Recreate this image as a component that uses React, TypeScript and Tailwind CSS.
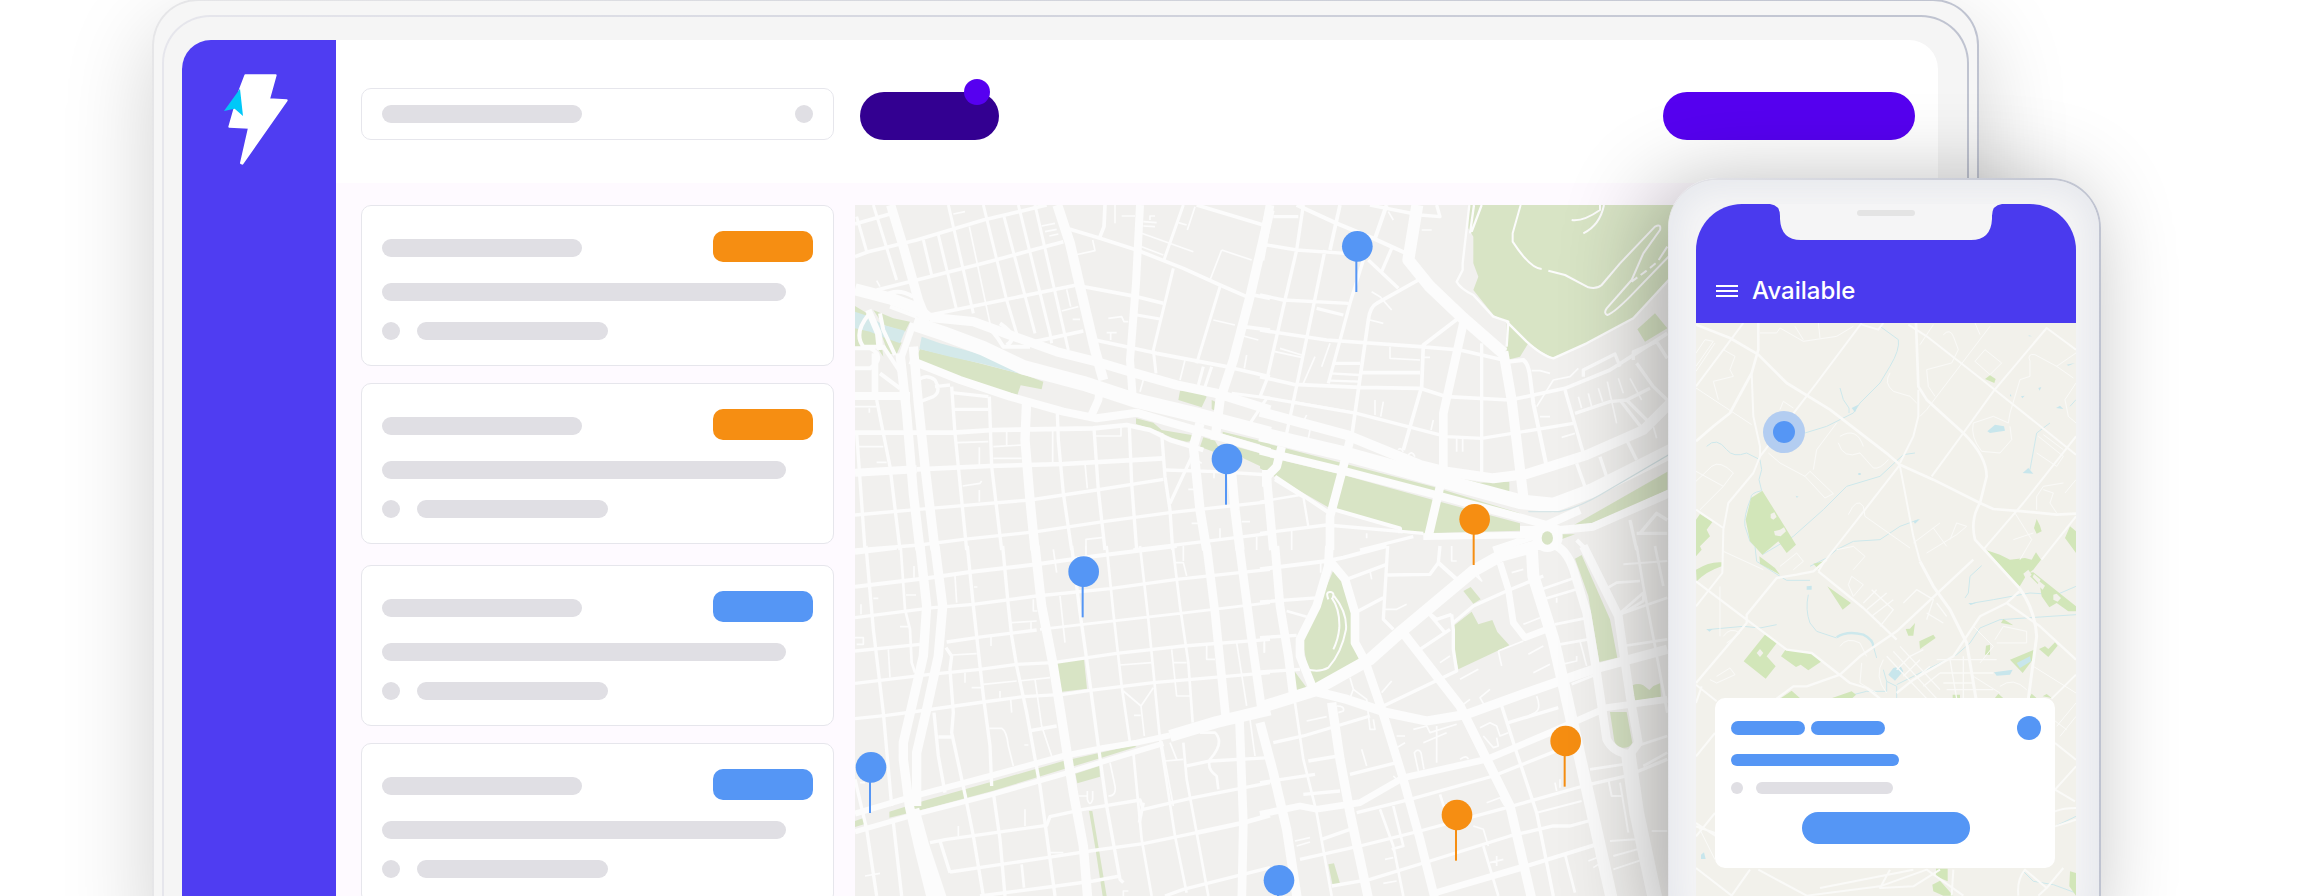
// Dispatch landing illustration
// Tablet dashboard with job cards and city map, phone app overlapping on the right

import { clsx } from 'clsx';

type Road = [width: number, path: string];

type Tile = {
  x: number;
  y: number;
  parks: string;
  water: string;
  roads: Road[];
};

type Pin = { x: number; y: number; tone: 'blue' | 'orange' };

// Map drawings use three units per pixel, one tile per quadrant
const CITY: Tile[] = [
  {
    x: 0,
    y: 0,
    parks:
      'M15 318L60 345L90 400L100 470L80 440H15ZM70 330L130 355L180 365L165 395L100 375ZM95 405L155 428L140 462H115ZM210 447L350 480L525 525L580 545L575 568L512 556L502 585L380 550L290 515L198 478ZM990 572Q1045 568 1070 590L1055 622L985 600ZM858 655L910 668L935 690L1025 705Q1030 725 1010 725Q960 715 930 695L858 672ZM1060 712L1095 722L1105 740L1090 755L1050 740ZM1118 695L1260 730V742L1118 702ZM1150 738L1260 768V812L1180 775ZM1085 600L1105 610L1100 635L1085 627Z',
    water:
      'M15 335L60 350L100 375L165 392L150 430L100 412L60 395L15 385ZM215 410L270 430L400 465L480 495L525 525L400 492L300 470L208 447Z',
    roads: [
      [44, 'M190 370L280 400L400 445L520 502L700 550L860 602L1040 645L1260 702'],
      [36, 'M15 268L120 295L200 325L240 360'],
      [28, 'M240 352L370 365L480 405L620 455L740 485L840 515L980 555L1100 580L1260 630'],
      [24, 'M180 480L330 540L480 590L640 635L740 655L860 638L950 665L1100 708L1260 756'],
      [30, 'M622 15L660 130L690 260L735 450L760 540'],
      [24, 'M870 15L858 250L840 480L848 590M15 588H180M15 818L200 808M750 560L745 600L725 645'],
      [28, 'M1260 30L1200 290L1150 480L1110 600L1095 720M122 15L160 140L205 300L225 350'],
      [28, 'M150 460L170 640L190 880L210 1050M190 440L205 610L225 800L255 1050M530 600L525 720L540 900L555 1050M1050 670L1030 740L1040 830L1050 930L1070 1050M1145 820L1155 930L1170 1050M1250 810V860'],
      [20, 'M55 330L85 400L90 450M190 370L155 470M75 460V600'],
      [12, 'M90 340L100 390L135 465M55 345Q10 400 40 440H100L160 530M15 445H60Q110 470 60 505H15M90 520L150 565M100 290Q140 260 190 290M120 320L200 350M400 370Q430 390 460 440H540M450 370Q510 410 470 435'],
      [14, 'M200 808L420 798L640 792L940 775M15 698H310L430 690L730 685L830 675L900 690L960 720L1060 750'],
      [11, 'M15 72L120 42M15 170L55 155L200 120L400 60L590 15M80 270L200 240L400 190L640 125M240 345L460 300L680 255M540 428L700 393M650 85L750 115L860 150L1000 205L1110 255L1190 290M765 15L762 80L750 110M1040 15L1240 75M690 258L860 290L940 310M735 420L920 460L1130 500L1260 530M1210 285L1260 295M1180 380L1260 390'],
      [9, 'M70 15L140 240M20 50L50 155M295 15L370 340M400 15L470 300L500 400M505 15L600 400L605 430M555 15L655 450M220 120L245 225M265 105L320 330M462 50L555 400M1000 15L940 185M970 205L910 450L918 520M1110 260L1040 490M860 345L930 357M1085 500L1065 560M1145 580L1260 595M1250 595L1200 670M1060 500L1045 555'],
      [10, 'M80 600L120 800L150 1050M20 700L45 1050M305 560L315 700L350 1050M418 590L425 800L455 1050M622 640L625 720L640 880L665 1050M935 700L945 830L960 930L968 1050M960 910L1030 760M732 685L745 870L765 1050M838 680L845 850L860 1050'],
      [10, 'M15 945L240 925L540 900L740 870L940 838M15 1050L210 1035L340 1018L560 995L760 965L960 938L1260 905M945 810L1100 815L1260 825M850 1050L1060 1025L1260 1000M305 578L415 590M315 628H415M205 540Q230 520 255 540Q275 575 250 590L210 605M255 560L300 555'],
      [5, 'M358 80L420 370M1115 150L1080 240M1115 150L1205 180M1090 360L1155 375M730 708H813V680M320 728L415 725M430 740L515 735M430 775H515M470 690V735M608 690V790M388 742V800M338 858L390 850L395 843M388 870V905M705 790L712 865M575 78L615 70M585 95L620 88M598 108L625 102M675 165L735 152L728 120M795 15V70M815 48H855M880 65L920 68M880 78L915 80M900 60V48H915M875 100L1030 155M875 140L940 165M1035 20L1012 90M985 68L1010 75M775 355L815 350L822 365H835M770 398H800M782 398V420M635 333L685 320M650 268L662 320M668 358H690M880 540L870 575M1005 480L990 540M1190 465L1183 505M1180 408L1225 420M310 42L345 35M80 242L90 260M15 620H80M58 625V638M25 740H100M80 787H110M708 1050V1018L762 1012M1015 868H1035M1025 970H1045M1110 985V1015M1175 965H1200M1220 1010V1050M1040 780L1055 790M1092 815V835'],
    ],
  },
  {
    x: 1230,
    y: 0,
    parks:
      'M625 15H1400V200L1222 240L1160 310L1120 355L980 430L880 475Q840 455 800 425L740 365L700 345L640 270L655 230L640 190V110L625 85ZM740 370L805 430L780 470L740 480ZM1132 388L1185 340L1222 385L1155 425ZM0 725L520 860L780 940V948L500 872L0 738ZM565 828L660 848L748 845V882L660 858ZM0 765L250 825L520 900L780 970V992L490 1000H430L415 980L210 925L45 830L0 805ZM925 985L1222 815V870L1090 930L960 985ZM898 1003H945L898 1020Z',
    water: '',
    roads: [
      [44, 'M0 702L250 760L540 840L780 905L880 915L1000 870L1240 750'],
      [30, 'M0 635L260 705L480 795L560 815L700 835L800 822L980 765L1150 690L1240 600M730 455L755 600L790 890'],
      [24, 'M0 752L260 815L530 885L790 955L860 975L960 930M780 990L900 990L1000 980L1240 875'],
      [36, 'M472 15L445 180L510 260L610 355L730 460'],
      [26, 'M30 15L0 180M610 370L550 640V810M270 720L250 800L210 950V1050M65 740L50 800L20 830L40 1050M540 860L505 1010'],
      [20, 'M490 1010L800 1005L900 985M700 1050L850 1000'],
      [12, 'M110 15L230 70L340 115L450 165M380 15L345 115M745 485L790 480Q805 490 810 530L820 610L860 800M45 830L210 940M45 838L130 890M210 925L420 985V1000M950 1020L980 1050'],
      [11, 'M475 240L350 310Q330 320 325 360L275 710M0 390L200 420L480 440L600 450L730 480M595 355L490 435L485 560L430 750M0 530L100 553L300 562L480 565L560 590L750 600L915 565L1050 510L1222 400M305 518H480M240 15L210 150'],
      [10, 'M130 15L110 150L75 300L20 540L0 590M195 150L160 320L80 700M20 135L110 150L255 160M310 180L270 310L205 550M325 180L415 265M395 145L365 215M0 285L70 300L265 310M665 430V830M170 325L250 345M0 590L290 640L560 710L665 715L850 685L940 670M220 490H300M330 15L480 45L540 50L530 15M40 50H115'],
      [10, 'M915 570L970 760M945 640L1050 605L1100 600L1170 565M970 530V510L1065 462L1080 500M1120 480V455L1190 425L1222 475M1130 490L1180 560L1222 600M1080 600L1150 690M1100 600L1170 670M1100 720L1130 780M1020 770L1040 830M950 790L975 860M0 1000L200 975L490 1000M300 1050L460 1010M1110 960L1130 1050M1140 1000L1190 940L1222 960M1130 1000H1222'],
      [7, 'M740 365L800 425Q850 470 880 475L980 430L1120 355L1240 225M628 15L608 190V210L590 245Q600 265 640 285L700 350L745 365L740 440M642 15L630 100M665 15L635 95M0 905L120 885M130 890L145 980M210 520L298 525M210 542L298 545'],
      [6, 'M782 15L758 100V125Q810 205 845 207M865 212L915 225L985 262Q1010 268 1025 255L1080 190L1185 80Q1205 70 1200 90L1150 160L1115 240L1040 325Q1030 340 1042 345Q1060 340 1110 290L1240 155M935 60Q970 65 1020 30V15M970 100Q1020 75 1032 15M1115 245L1132 232M1142 225L1160 212M1170 204L1187 190M1196 180L1222 140'],
      [5, 'M955 590L965 625M985 580L995 620M1015 565L1028 605M1042 545L1070 670M1075 535L1090 580M1110 535L1145 600M840 650H870M905 712L945 700M815 512H840L870 520M830 620L880 540L930 530L955 505M345 600V645M370 605L362 650M590 715V755M608 715V755M520 660L513 690M390 440V475L480 480M485 472H510M60 445L125 465M45 455L125 472M165 470L130 550M210 430L185 500M335 275L360 290L395 330M330 360L370 370M485 90H515M100 605L270 635M140 645L130 665M150 690L145 715M1180 680L1190 715M385 35L400 60M95 990V1050M320 1000V1015M415 750Q420 740 430 755M445 765Q455 750 465 770'],
    ],
  },
  {
    x: 0,
    y: 1038,
    parks:
      'M617 350L702 340L711 428L636 437ZM676 683L748 660L750 692L682 712ZM15 825L42 815V835L15 843ZM118 797L220 765L425 707L640 645L850 598L860 602L750 637L640 670L430 734L222 790L118 815ZM717 795H727L745 900L770 1050H758L735 900Z',
    water: '',
    roads: [
      [28, 'M210 0L230 180L220 330L160 590V640L178 780L210 920L250 1080M255 0L278 180L265 330L230 490L200 620L200 780M555 0L575 180L610 360L640 550L670 740L700 900L715 1080'],
      [36, 'M190 790L220 900L280 1080M1260 490L1100 528L960 570'],
      [26, 'M1070 0L1095 200L1128 520M1168 0L1205 280L1235 490M1168 510L1180 830L1175 1080'],
      [18, 'M960 568L860 590L760 606L640 630L420 690L200 748L15 803'],
      [16, 'M940 592L860 616L640 684L420 747L200 804L15 857'],
      [12, 'M15 122L240 95L360 78L560 55L720 32L980 0M15 20L140 5'],
      [10, 'M15 215L250 185L370 175L560 150L780 128L980 100L1260 70M290 288L400 272L560 252M15 315L210 295M15 412L240 385L390 370L500 355L610 350L800 322L1000 300L1260 280M15 518L110 508L230 492L400 468L520 452L640 445L720 433L910 410L1260 380'],
      [10, 'M48 0L70 250L100 500L125 780M352 0L370 180L400 450L420 600L425 720M458 0L475 180L485 270L500 360L530 500L570 720L600 940L615 1050M665 0L690 200L710 340L745 600L770 780L810 1000L820 1010M252 500L265 630L285 740M288 305L305 330L300 370L310 500L305 560L345 745L370 870L400 1050M535 555L620 540M265 573H305'],
      [8, 'M152 0L165 190L180 250L185 350L195 380M770 0L790 200L815 420L840 590M870 0L895 220L930 580L975 870L1010 1040M968 0L990 180L1015 350L1028 530M570 250L700 235L990 202L1260 170M850 620L875 880L905 1050M1000 590L1010 700L1040 860L1075 1050M515 955L522 1025'],
      [10, 'M1040 860L880 893L740 912L590 935L300 978M130 830L155 1050M15 700L50 850L80 1050M430 740L450 880L465 1050M240 890L290 880L420 862L590 838L600 812L700 790L870 762L880 790L1030 755L1260 710M880 770L868 830M270 885L300 980M390 1050L620 1020L730 1005L810 990M945 1050L1000 1030L1260 965M1010 660L1080 645L1260 635'],
      [14, 'M1040 860L1180 830L1260 808'],
      [8, 'M1050 560L1095 560Q1125 590 1080 640Q1070 670 1100 690L1105 730'],
      [5, 'M820 435L873 480L910 425M873 480L883 570M418 547H455Q470 555 475 600L490 660M315 90L320 170M630 150L645 290M485 230L560 225M543 225V250M550 160V195H562M345 380V410M365 425H395M400 415L500 405M505 405L600 395M423 270V300M450 435V455M482 460L485 500M555 400L575 540L605 630M305 327L380 323M780 650L795 720Q800 750 775 750M685 750H710M712 735V760Q720 785 728 760V735M525 790V840M325 870V840M45 990L90 982M600 920H640M810 357L905 350M965 310L980 450H1020M970 350H1010M1070 300V340H1095M1160 290L1190 480M945 645L1000 640M960 590L980 640M935 590L970 780M1200 520L1215 630M115 310L120 395M975 50H1000L1010 90M1000 0V45M70 157H85M168 147H198M150 242H175M15 275H40V295H20M192 60V95M33 175V205M372 123H382M610 10L620 80M708 0V30M523 597H535M1243 290V320M852 508H872M820 1050V1035H835M30 710H45'],
    ],
  },
  {
    x: 1230,
    y: 1038,
    parks:
      'M222 68L255 108L275 180V290L297 340L168 416L150 400L130 300Q130 270 150 240ZM103 375L140 425L108 438ZM610 135L632 123L662 160L640 173ZM580 240L635 197L655 235L697 222L712 258L748 298L595 370L580 310ZM945 38L965 27L1050 220L1072 335L1018 348L985 150ZM1117 418Q1135 410 1150 418L1168 432L1180 420L1200 412L1203 452L1123 465ZM1050 498H1100L1117 590Q1110 607 1085 605Q1068 602 1063 585ZM205 955L222 952L240 1012L218 1018Z',
    water: '',
    roads: [
      [36, 'M0 485L160 435L330 340L425 255L640 75L720 30L830 0M815 0L820 90L880 280L930 500L970 680L1060 1080'],
      [44, 'M1105 625L1130 800L1190 1080M820 -10H900'],
      [26, 'M45 0L60 180L85 330L100 450M208 0L205 60L170 180L120 280V330L160 430M205 40L255 100L285 200V290L315 345L365 490L430 700L480 880L530 1080M880 -5Q920 10 940 70L980 200L1010 380L1040 580Q1060 620 1110 625M970 0L1075 210L1095 350L1110 450L1135 590L1110 625'],
      [28, 'M425 255L600 480L680 640L750 780L820 1080M160 435L260 460L380 500L500 525L620 505L800 440L1000 370L1222 310M0 530L40 680L80 850L115 1080M215 470L240 640L270 800L330 1080'],
      [20, 'M720 50L745 130L760 230L795 275L860 250M0 805L120 780L170 790L300 770L430 695L680 640L870 560L1040 485L1222 460M510 1045L800 960'],
      [12, 'M0 70L200 45L250 35L380 0M535 50L590 100M800 960L1010 895'],
      [10, 'M260 100L380 55M295 195L370 155M383 0L370 220L400 250M380 87L510 85L535 50L540 0M0 168L180 155M0 275L110 268M0 378L120 370M580 230L640 180L740 135L850 90M575 205L530 220L500 195L555 260M575 205L580 250V310L590 375L370 480M480 310L570 250'],
      [10, 'M40 590L130 570L330 510M145 645L235 630M270 685L410 650M0 710L165 685M130 745L240 735M290 800L450 760L700 690L900 610L970 600M120 940L300 900L480 855L740 785L970 720L1100 690L1222 640M185 880L270 850M215 1020L330 1000L510 945L750 870L880 840L930 840L985 825M725 480L770 620L830 800L880 1050M745 530L895 485'],
      [8, 'M105 470L130 640L170 800L215 1050M80 195L140 212M360 790L400 900L430 1050M400 780L430 900L395 910M540 745L570 840M670 900L715 1050M915 925L945 1040M845 130L945 95M850 160L950 130M885 235L985 215M900 295L985 280M935 415L1010 385M1070 210L1150 140V165L1075 210M1080 205L1222 155M1035 130L1070 110L1140 105M1130 0L1150 120L1185 300L1222 500M1090 300L1222 280M1130 600L1222 570M1150 660L1222 620M990 670L1090 655M1185 0L1210 120'],
      [6, 'M205 160Q195 135 213 138Q225 140 217 158M215 155Q240 190 238 245Q235 280 220 310M222 150Q262 200 258 250Q245 320 205 365Q180 380 140 370Q125 350 128 325M1045 700L1055 750H1090M1080 710L1105 860M1050 885L1130 880V865M1060 930L1150 905M1060 970L1150 940M1175 855H1222M830 800L965 765M1090 55L1222 45'],
      [5, 'M375 190H410L440 175M330 75L335 100M270 395L280 430L320 460L330 550H345L340 520M280 430L265 470M395 405L365 440M230 480Q255 480 250 495L235 500M140 525L200 512M475 675L463 620Q475 605 483 620L492 670M530 540V650M305 610L320 660M460 550L500 540L510 560L590 535M490 590L560 560M410 570H435M410 605L435 590M105 885L150 875M110 900L150 888M690 430L660 455L680 490M610 475L630 460M600 400L655 370M715 315L725 360M715 315L790 285M540 350L570 330M650 80L665 105L648 90M790 70L755 80M790 235L840 215M820 380L870 355M905 355L950 345V330M890 155V170M805 325L850 300M830 450Q845 490 825 500L805 510M660 545L690 530L710 540L720 570L745 560M670 570L700 605L715 600L710 575M575 0V45H590M680 770L720 755L735 780M640 840L670 850L685 900M690 950L730 940M710 930V960M885 710L890 735M900 700V725M985 945L1010 935M1000 965L1015 955M370 1012L410 1005M375 940L400 935M960 285L980 360M13 280V320M182 45V80M400 690L415 705M600 640Q620 625 625 640'],
    ],
  },
];

const SUBURB: Tile[] = [
  {
    x: 0,
    y: 0,
    parks:
      'M247 963L348 1125L320 1150L295 1115L247 1155L210 1115L197 1050L213 985ZM60 1033L97 1057L80 1080L90 1100L60 1130L65 1140L48 1160V1050ZM915 628L930 617L947 628L943 640ZM1062 1075L1070 1048L1080 1068L1085 1085L1070 1092ZM1155 1105L1170 1070L1188 1085V1150ZM920 1142L960 1155L990 1170L1035 1165L1055 1170L1068 1148L1083 1170L1060 1200L1040 1215L1018 1252ZM48 1200Q90 1175 125 1178V1190Q80 1205 50 1235ZM238 1160L285 1195L300 1215L240 1182Z',
    water:
      'M922 785L945 765L972 770L975 783L930 790ZM1028 910L1045 895L1060 912ZM515 715L535 705L525 728ZM1128 715L1140 708L1150 718ZM700 1055L720 1048L705 1062ZM1075 655L1084 652L1079 663ZM1023 680L1034 678L1027 686ZM1160 585L1185 580L1165 588ZM990 672L995 680H990ZM1046 497L1056 500H1046ZM535 910H542V916H535ZM347 978L356 981L350 984Z',
    roads: [
      [8, 'M48 465L150 505L235 555L320 640L450 720L625 855L660 885L760 930L900 1000L940 1018L1030 1025L1130 1035L1188 1032M235 460V540L215 610L150 730L100 770L48 815M708 460L715 650L740 690L850 790Q920 860 920 920L900 1000Q870 1050 885 1110L1018 1255'],
      [6, 'M215 610L220 740L240 830V860L220 910L145 1000L130 1080L127 1210L48 1310M545 460L410 640L345 725L240 860M190 460L48 650M685 465L740 500L900 625L1188 855M715 660V740L700 800L660 880M660 885L520 1065L430 1180L415 1205M660 890L700 1100L720 1175M1188 540L1100 475L940 665L850 790L755 920M1188 800L1030 1000L910 1140M1188 1040L1085 1170M48 1020L130 1075M545 465L595 480L610 460'],
      [3, 'M48 590L100 515L75 510L48 550M105 520L48 605M130 540L165 560L150 600L160 620L100 635L115 690M48 655L215 765M240 490L290 490L300 475L370 515L470 500L520 470M345 470L370 510M415 460L420 505M930 470L740 720L720 740M760 465L720 525M790 495Q810 475 820 500L835 540L815 580L740 600L745 650L765 680M630 610Q610 640 640 665L690 680L710 700M915 540L965 580L930 615L885 575ZM1065 555Q1040 550 1050 575L1050 620L1020 630L990 730L985 760L940 740L880 760Q870 800 905 845L960 850L995 810L990 770M1065 555L1130 590L1188 550M1130 590L1180 625M1188 640L1155 690L1165 740L1188 760M1075 800L1150 860L1130 890L1070 850M1090 795L1150 840'],
      [3, 'M48 905L130 950L160 910Q120 870 95 890L48 935M130 950L60 1020M265 850L300 880L375 920L435 985L460 972L390 905L375 920M470 760L410 840L400 900M475 820Q490 870 540 850L580 895Q600 900 625 870M480 800Q530 770 550 830M505 1035Q530 980 550 1010L555 1040L690 1135M700 1120L780 1060M740 1150L830 1095L860 1070L830 1060L810 1110M760 1075L800 1130M130 1145L250 1200M300 1190L350 1150L370 1175L340 1200M470 1140L520 1130L555 1160L520 1200M885 460L900 495M1070 1020V980L1090 950L1150 940M1090 960L1120 970L1110 1000L1130 1030M1155 970L1188 930M1005 1030L1055 1110L1020 1170M1000 1110L1060 1090M300 720L310 695L340 715'],
    ],
  },
  {
    x: 0,
    y: 1170,
    parks:
      'M400 12L432 5L415 28ZM442 80L513 130L488 150ZM257 222L292 248L260 290L287 320L257 357L191 305ZM318 268L395 280L425 305L385 332L362 315L348 322L303 290ZM677 208L690 207L705 190L700 228H685ZM718 245L760 225L767 235L720 268ZM918 258L930 255V285H915ZM1040 40L1060 38L1188 140V155H1165L1130 130L1108 143L1085 110L1080 80ZM963 190L970 178L1000 197ZM990 300L1062 270V295L1028 340ZM1077 268L1095 260L1105 268L1125 248L1133 258L1105 292ZM300 417L335 393L362 417ZM450 417L515 395L528 405L515 417ZM818 405H840V417H818ZM943 417L955 402L972 417ZM1045 417L1055 402L1072 417ZM1088 410L1100 403L1115 415ZM768 927H803V965L768 950ZM757 975L780 963L820 1008H790L760 995ZM1170 935L1188 940V1008L1168 980Z',
    water:
      'M625 345L640 325L662 320L670 335L645 363ZM1010 310L1050 290L1053 305L1020 325ZM942 338L998 330L990 345L950 348ZM380 80L395 78V90H380ZM865 130H888L872 136ZM63 885L72 878L77 898H63ZM80 208H98L88 216Z',
    roads: [
      [9, 'M1018 85Q1065 150 1070 230L1045 417M720 5L760 80L810 150L860 250L888 417'],
      [7, 'M48 65L200 180L320 270L395 280L510 370L560 385L600 417M440 0L400 35L350 45L290 55L200 165V190L48 370M415 35L550 145L650 240M880 0L650 215L540 290L480 345L380 380H340L290 417M1018 95L980 130L900 170L820 290L700 360L650 400M980 130L1080 200L1188 300'],
      [6, 'M48 375L110 425M48 590L105 520M65 380L48 430M1188 345L1115 417M1125 690L1188 620M1125 550L1188 600M1125 690L1185 725M48 790L170 870M48 830L105 760M105 820L48 800M1125 800L1188 780M1125 755Q1150 745 1188 745M48 925L155 1008L210 930M235 930L380 1008L600 980L740 930L850 1008M820 930L815 1008M1015 1008Q1010 960 1035 930L1100 985L1150 925M1100 985L1075 1008M420 985L700 930M630 930L600 985L700 980L780 930'],
      [4, 'M620 290L740 417M640 275L770 417M660 260L780 390M690 290L650 330M720 300L670 350M750 320L690 370M780 340L730 380M810 300L830 417M850 290V417M770 300H950M780 340H940M790 370H880M800 390H940M690 290L730 270M575 90L640 150L600 200M550 130L590 90M560 150L620 100M575 170L640 120M670 130L710 90L760 120L740 180M740 160L790 190M770 130L800 170'],
      [3, 'M545 310L540 370L590 400M480 260Q500 230 540 250L560 290M610 300Q580 350 620 400M945 240L970 200L1040 215V250H950M880 200L940 260L900 310M880 350L960 400M960 380Q1000 350 1040 390M1060 320L1188 400M1130 500L1188 430M1140 530L1188 470M1120 480L1160 510M90 360L110 370L165 345L150 325L110 350M130 230Q150 200 180 220L140 250M515 50L550 75L520 110L505 75ZM120 80V230M50 790L105 900'],
    ],
  },
];

const STREAMS =
  'M80 830Q110 800 140 840Q160 865 200 850L240 870L245 900L237 930L245 963Q210 970 213 985Q190 1040 195 1070L210 1115L225 1130L230 1175L300 1220L320 1232H390M600 470L655 510Q660 540 630 590L600 640L540 700L520 730L440 770L375 790M480 655L490 690L507 715V730M705 850L670 855L600 920L500 950L430 1020L340 1100L247 1155M715 1050L660 1070L600 1110L520 1115L470 1140L440 1165L390 1190M1110 760L1070 790L1050 900M1188 690L1170 710M385 1275Q375 1320 390 1360L410 1385L470 1405M580 1430L590 1465M610 1500L620 1535L650 1550V1585M650 1545L780 1480L830 1455L870 1420L900 1375L960 1350L1188 1335M620 1535V1565H560L500 1580M80 1380L190 1370L240 1375L290 1365M1188 1250L1130 1275L1050 1270L940 1290L880 1300M905 1188L870 1220L865 1270L855 1285M1030 2105L1060 2135L1120 2145L1188 2170M1125 1970L1188 1940';

const CITY_PINS: Pin[] = [
  { x: 1522, y: 139, tone: 'blue' },
  { x: 1131, y: 777, tone: 'blue' },
  { x: 701, y: 1115, tone: 'blue' },
  { x: 63, y: 1702, tone: 'blue' },
  { x: 1287, y: 2041, tone: 'blue' },
  { x: 1874, y: 958, tone: 'orange' },
  { x: 2147, y: 1623, tone: 'orange' },
  { x: 1821, y: 1845, tone: 'orange' },
];

const JOB_GROUPS: Pin['tone'][][] = [
  ['orange', 'orange'],
  ['blue', 'blue'],
];

function Bar({ className }: { className: string }) {
  return <span className={clsx('block shrink-0 rounded-full', className)} />;
}

function Logo() {
  return (
    <svg className="h-[91px] w-16" viewBox="252 222 192 273">
      <path
        d="M316 226H407L387 298L440 301L307 491L303 489L327 383L268 380L300 268Z"
        fill="#fff"
        stroke="#fff"
        strokeWidth="6"
        strokeLinejoin="round"
      />
      <path d="M300 266L309 348L284 326L252 333Z" fill="#00c8f8" />
    </svg>
  );
}

function Tiles({ tiles, park, water, road }: { tiles: Tile[]; park: string; water: string; road: string }) {
  return (
    <>
      {tiles.map((t) => (
        <g key={`land-${t.x}-${t.y}`} transform={`translate(${t.x} ${t.y})`}>
          <path d={t.parks} fill={park} />
          <path d={t.water} fill={water} />
        </g>
      ))}
      {tiles.map((t) => (
        <g
          key={`road-${t.x}-${t.y}`}
          transform={`translate(${t.x} ${t.y})`}
          fill="none"
          stroke={road}
          strokeLinejoin="round"
        >
          {t.roads.map(([width, d]) => (
            <path key={d} d={d} strokeWidth={width} />
          ))}
        </g>
      ))}
    </>
  );
}

function CityMap() {
  return (
    <svg className="absolute inset-0 h-full w-full bg-[#f1f0ee]" role="img" aria-label="City map with jobs">
      <g transform="scale(0.33333) translate(-15 -15)">
        <Tiles tiles={CITY} park="#d8e4c5" water="#d4e9ea" road="#fcfcfc" />
        <path
          d="M2035 935H2130Q2190 920 2250 885L2460 762"
          fill="none"
          stroke="#d8e6e8"
          strokeWidth="4"
        />
        {/* Roundabout */}
        <circle cx="2092" cy="1010" r="46" fill="#fcfcfc" />
        <ellipse cx="2092" cy="1014" rx="17" ry="20" fill="#d8e4c5" />
        {CITY_PINS.map((pin) => (
          <g key={`${pin.x}-${pin.y}`} fill={pin.tone === 'blue' ? '#5596f5' : '#f68e12'}>
            <rect x={pin.x - 6} y={pin.y + 40} width="6" height="97" />
            <circle cx={pin.x} cy={pin.y} r="46" />
          </g>
        ))}
      </g>
    </svg>
  );
}

function SuburbMap() {
  return (
    <svg className="absolute inset-0 h-full w-full bg-[#f2f1eb]" role="img" aria-label="Map around you">
      <g transform="scale(0.33333) translate(-48 -460)">
        <path d={STREAMS} fill="none" stroke="#cde8ec" strokeWidth="3" />
        <path
          d="M470 1403Q500 1382 550 1395Q580 1410 580 1432"
          fill="none"
          stroke="#cde8ec"
          strokeWidth="7"
        />
        <Tiles tiles={SUBURB} park="#d2e6b9" water="#c8e6ec" road="#fafaf8" />
        {/* Clearings inside the parks */}
        <path
          d="M272 1033L283 1028L290 1042L280 1050L272 1045ZM282 1085L300 1080L312 1073L318 1085L302 1100L285 1097ZM240 1438L250 1450L240 1462L230 1450ZM1120 1275L1130 1272L1143 1285L1133 1296L1120 1290ZM1030 1212L1045 1200L1055 1215L1040 1232ZM1062 1213L1082 1230L1075 1240L1058 1222ZM1078 1235L1095 1248L1088 1260L1072 1245Z"
          fill="#f2f1eb"
        />
        <circle cx="312" cy="787" r="63" fill="#b3cdf1" />
        <circle cx="312" cy="787" r="33" fill="#5596f5" />
      </g>
    </svg>
  );
}

function JobCard({ tone }: { tone: Pin['tone'] }) {
  return (
    <li className="flex flex-col gap-[21px] rounded-[10px] border border-[#e6e6ec] bg-white px-5 py-[25px]">
      <div className="flex items-start justify-between">
        <Bar className="mt-2 h-[18px] w-[200px] bg-[#e0dfe4]" />
        <span
          className={clsx(
            'h-[31px] w-[100px] rounded-[10px]',
            tone === 'orange' ? 'bg-[#f68e12]' : 'bg-[#5596f5]'
          )}
        />
      </div>
      <Bar className="h-[18px] w-[404px] bg-[#e0dfe4]" />
      <div className="flex gap-[17px]">
        <Bar className="size-[18px] bg-[#e0dfe4]" />
        <Bar className="h-[18px] w-[191px] bg-[#e0dfe4]" />
      </div>
    </li>
  );
}

function Dashboard() {
  return (
    <div className="flex min-h-screen overflow-hidden rounded-t-[29px] bg-white">
      <nav className="flex w-[154px] shrink-0 justify-center bg-[#4f3df2] pr-[6px] pt-[34px]">
        <Logo />
      </nav>
      <div className="flex min-w-0 flex-1 flex-col">
        <header className="flex h-[143px] shrink-0 items-end gap-[26px] pb-[43px] pl-[25px] pr-[23px]">
          <label className="relative flex h-[52px] w-[473px] items-center justify-between rounded-[10px] border border-[#e6e6ec] px-5">
            <Bar className="h-[18px] w-[200px] bg-[#e0dfe4]" />
            <Bar className="size-[18px] bg-[#e0dfe4]" />
            <input
              type="search"
              aria-label="Search jobs"
              className="absolute inset-0 rounded-[10px] bg-transparent px-5 outline-none"
            />
          </label>
          <button aria-label="Filter" className="relative h-12 w-[139px] rounded-full bg-[#330091]">
            <span className="absolute -top-[13px] right-[9px] size-[26px] rounded-full bg-[#5600f0]" />
          </button>
          <button aria-label="New job" className="ml-auto h-12 w-[252px] rounded-full bg-[#5600f0]" />
        </header>
        <main className="flex flex-1 gap-[21px] bg-[#fefaff] pl-[25px] pt-[22px]">
          <div className="flex w-[473px] shrink-0 flex-col gap-[21px]">
            {JOB_GROUPS.map((group, i) => (
              <ul key={i} className="flex flex-col gap-[17px]">
                {group.map((tone, j) => (
                  <JobCard key={j} tone={tone} />
                ))}
              </ul>
            ))}
          </div>
          <div className="relative flex-1 overflow-hidden">
            <CityMap />
          </div>
        </main>
      </div>
    </div>
  );
}

function Tablet() {
  return (
    <div className="-mt-px ml-[152px] mr-[331px] rounded-t-[46px] bg-linear-to-r from-[#e6e6e8] to-[#bfc3d0] px-[2px] pt-[2px] shadow-[0_30px_90px_rgba(0,0,0,0.18)]">
      <div className="rounded-t-[44px] bg-[#f6f6f6] px-2 pt-[14px]">
        <div className="rounded-t-[48px] bg-linear-to-r from-[#e6e6ec] to-[#bfc3d0] px-[2px] pt-[2px]">
          <div className="rounded-t-[46px] bg-[#f5f5f5] pl-[18px] pr-[29px] pt-[23px]">
            <Dashboard />
          </div>
        </div>
      </div>
    </div>
  );
}

function Phone() {
  return (
    <div className="absolute -bottom-12 right-[209px] top-[178px] w-[433px] rounded-[50px] bg-linear-to-r from-[#e4e4e8] to-[#bfc3d0] pb-[2px] pl-px pr-[2px] pt-[2px] shadow-[-16px_10px_90px_rgba(0,0,0,0.3)]">
      <div className="flex h-full flex-col rounded-[48px] bg-[#f5f5f6] pb-11 pl-[27px] pr-[23px] pt-6 shadow-[inset_0_0_30px_10px_#e6e8ed]">
        <div className="flex flex-1 flex-col overflow-hidden rounded-t-[46px]">
          <header className="relative flex h-[119px] shrink-0 items-end gap-[14px] bg-[#4a3aee] px-5 pb-4">
            {/* Notch */}
            <svg className="absolute left-1/2 top-0 h-9 w-[232px] -translate-x-1/2" viewBox="0 0 232 36">
              <path d="M0 0Q10 1 10 12V15Q11 36 31 36H201Q221 36 222 15V12Q222 1 232 0Z" fill="#f5f5f6" />
              <rect x="87" y="6" width="58" height="6" rx="3" fill="#e4e4e4" />
            </svg>
            <button aria-label="Menu" className="flex h-8 w-[22px] flex-col justify-center gap-[3px]">
              <span className="h-[2px] w-full bg-white" />
              <span className="h-[2px] w-full bg-white" />
              <span className="h-[2px] w-full bg-white" />
            </button>
            <h1 className="font-['Inter',sans-serif] text-2xl font-medium leading-8 text-white">Available</h1>
          </header>
          <div className="relative flex-1 pl-[19px] pr-[21px] pt-[375px]">
            <SuburbMap />
            <section className="relative flex flex-col rounded-[10px] bg-white pb-6 pl-4 pr-[14px] pt-[18px]">
              <div className="flex items-center gap-[6px]">
                <Bar className="h-[14px] w-[74px] bg-[#5596f5]" />
                <Bar className="h-[14px] w-[74px] bg-[#5596f5]" />
                <Bar className="ml-auto size-6 bg-[#5596f5]" />
              </div>
              <Bar className="mt-[14px] h-3 w-[168px] bg-[#5596f5]" />
              <div className="mt-4 flex gap-[13px]">
                <Bar className="size-3 bg-[#e0dfe4]" />
                <Bar className="h-3 w-[137px] bg-[#e0dfe4]" />
              </div>
              <button
                aria-label="Accept job"
                className="mt-[18px] h-8 w-[168px] self-center rounded-full bg-[#5596f5]"
              />
            </section>
          </div>
        </div>
      </div>
    </div>
  );
}

export default function App() {
  return (
    <div className="relative h-screen overflow-hidden bg-white">
      <Tablet />
      <Phone />
    </div>
  );
}
